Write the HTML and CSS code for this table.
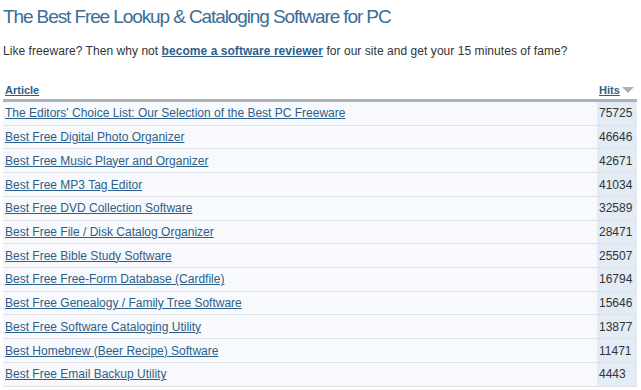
FILE: index.html
```html
<!DOCTYPE html>
<html>
<head>
<meta charset="utf-8">
<link rel="stylesheet" href="styles.css">
</head>
<body>
<div class="page">
  <h1 class="title">The Best Free Lookup &amp; Cataloging Software for PC</h1>
  <p class="intro">Like freeware? Then why not <a class="strong-link" href="#">become a software reviewer</a> for our site and get your 15 minutes of fame?</p>
  <table class="list">
    <thead>
      <tr>
        <th class="col-article"><a href="#">Article</a></th>
        <th class="col-hits"><a href="#">Hits</a><span class="sort-arrow"></span></th>
      </tr>
    </thead>
    <tbody>
      <tr><td class="col-article"><a href="#">The Editors' Choice List: Our Selection of the Best PC Freeware</a></td><td class="col-hits">75725</td></tr>
      <tr><td class="col-article"><a href="#">Best Free Digital Photo Organizer</a></td><td class="col-hits">46646</td></tr>
      <tr><td class="col-article"><a href="#">Best Free Music Player and Organizer</a></td><td class="col-hits">42671</td></tr>
      <tr><td class="col-article"><a href="#">Best Free MP3 Tag Editor</a></td><td class="col-hits">41034</td></tr>
      <tr><td class="col-article"><a href="#">Best Free DVD Collection Software</a></td><td class="col-hits">32589</td></tr>
      <tr><td class="col-article"><a href="#">Best Free File / Disk Catalog Organizer</a></td><td class="col-hits">28471</td></tr>
      <tr><td class="col-article"><a href="#">Best Free Bible Study Software</a></td><td class="col-hits">25507</td></tr>
      <tr><td class="col-article"><a href="#">Best Free Free-Form Database (Cardfile)</a></td><td class="col-hits">16794</td></tr>
      <tr><td class="col-article"><a href="#">Best Free Genealogy / Family Tree Software</a></td><td class="col-hits">15646</td></tr>
      <tr><td class="col-article"><a href="#">Best Free Software Cataloging Utility</a></td><td class="col-hits">13877</td></tr>
      <tr><td class="col-article"><a href="#">Best Homebrew (Beer Recipe) Software</a></td><td class="col-hits">11471</td></tr>
      <tr><td class="col-article"><a href="#">Best Free Email Backup Utility</a></td><td class="col-hits">4443</td></tr>
    </tbody>
  </table>
</div>
</body>
</html>
```
FILE: styles.css
```css
html, body {
  margin: 0;
  padding: 0;
  background: #ffffff;
}
body {
  font-family: "Liberation Sans", Arial, sans-serif;
  color: #333333;
}
.page {
  padding: 0 4px 0 3px;
}
.title {
  margin: 0;
  padding-top: 5px;
  font-size: 19px;
  letter-spacing: -1.1px;
  font-weight: normal;
  line-height: 24px;
  color: #3a6d98;
}
.intro {
  margin: 14px 0 0 0;
  font-size: 12px;
  letter-spacing: 0.05px;
  line-height: 16px;
  color: #333333;
}
.strong-link {
  color: #2d5f8a;
  font-weight: bold;
}
.list {
  margin-top: 22px;
  width: 100%;
  border-collapse: collapse;
  font-size: 12px;
}
.list a {
  color: #2d5f8a;
}
.list th {
  text-align: left;
  font-weight: bold;
  font-size: 11px;
  height: 18px;
  padding: 0 2px;
  border-bottom: 3px solid #aab2ba;
  vertical-align: middle;
}
.list td {
  height: 22.73px;
  padding: 0 2px;
  border-bottom: 1px solid #dde2e8;
  background: #f7f9fc;
  vertical-align: middle;
}
.list td.col-hits {
  background: #e3ebf5;
  width: 36px;
  color: #333333;
}
.list th.col-hits {
  width: 36px;
  white-space: nowrap;
}
.sort-arrow {
  display: inline-block;
  width: 0;
  height: 0;
  margin-left: 2px;
  border-left: 6px solid transparent;
  border-right: 6px solid transparent;
  border-top: 6px solid #aab2ba;
  vertical-align: 1px;
}
```
